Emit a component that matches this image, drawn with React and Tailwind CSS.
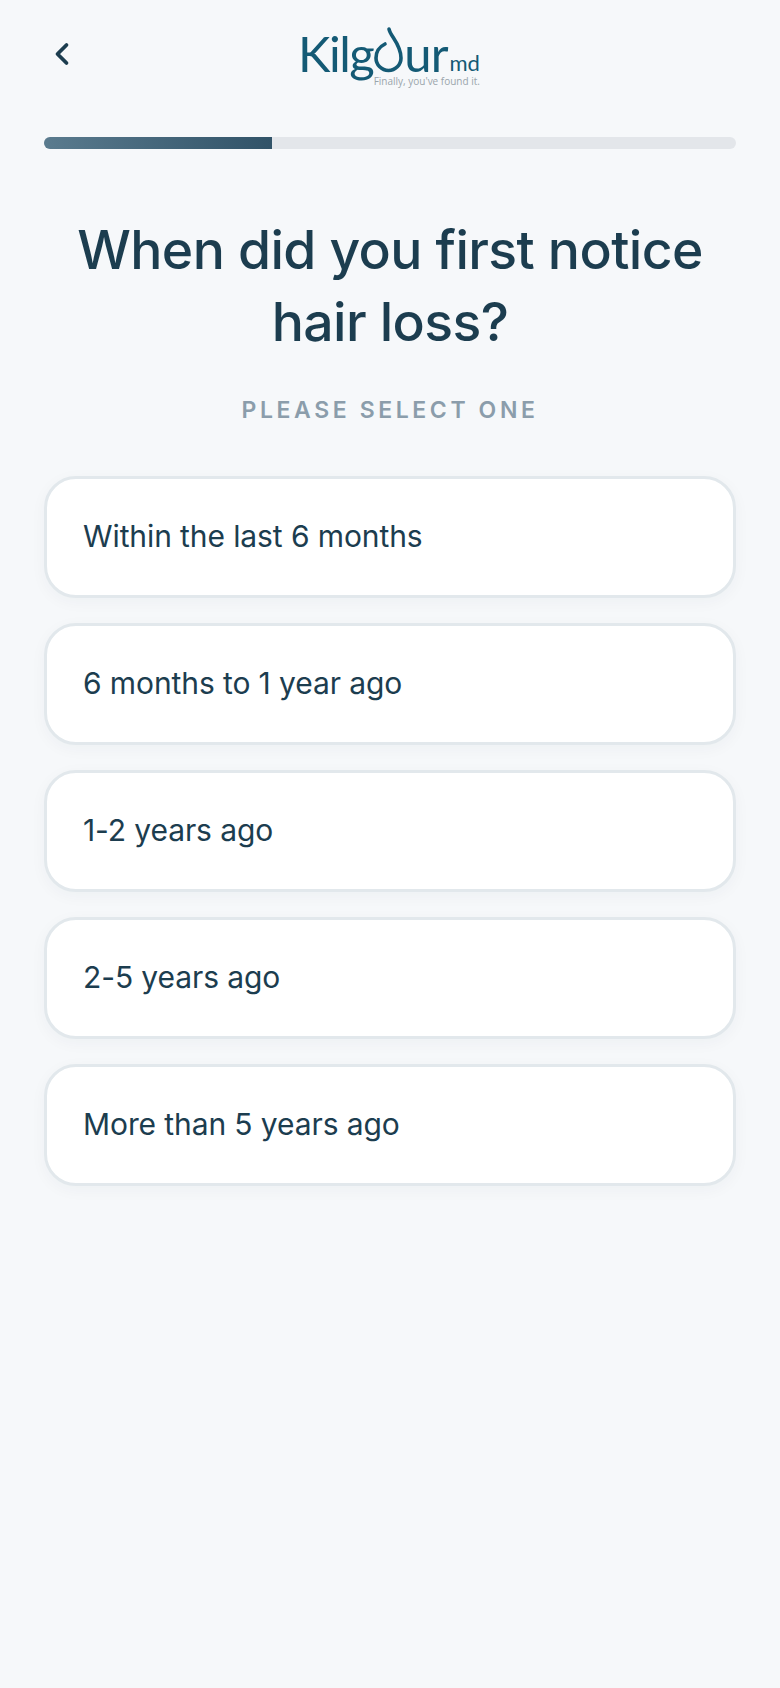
import { ChevronLeft } from 'lucide-react'

const OPTIONS = [
  'Within the last 6 months',
  '6 months to 1 year ago',
  '1-2 years ago',
  '2-5 years ago',
  'More than 5 years ago',
]

function Logo() {
  return (
    <div className="flex flex-col items-end font-['Lato',sans-serif] -ml-[2px]">
      <div className="flex items-end h-[48px] text-[#145a75]">
        <span className="text-[49px] leading-[46px] font-normal tracking-[-1.5px]">Kilg</span>
        {/* the drop stands in for the "o" */}
        <svg width="31" height="47" viewBox="0 0 31 47" fill="none" className="mb-[3px]">
          <path d="M16 3c1 7 12 15 12 29a12.5 12.5 0 0 1-25 0c0-8 5-12 9-14" stroke="#145a75" strokeWidth="3.6" strokeLinecap="round" />
        </svg>
        <span className="text-[49px] leading-[46px] font-normal tracking-[-1px]">ur</span>
        <span className="text-[22px] leading-[26px] ml-[2px]">md</span>
      </div>
      <span className="text-[10px] leading-[10px] text-[#9aa5ab] font-['Open_Sans',sans-serif]">Finally, you've found it.</span>
    </div>
  )
}

export default function App() {
  return (
    <div className="min-h-[1688px] bg-[#f6f8fa] px-[44px] font-['Inter',sans-serif] text-[#1c3d4f]">
      {/* Header */}
      <div className="relative flex justify-center pt-[28px] h-[137px]">
        <button className="absolute left-0 top-[36px] text-[#1c3d4f]">
          <ChevronLeft size={36} strokeWidth={2.5} />
        </button>
        <Logo />
      </div>

      {/* Progress */}
      <div className="h-3 rounded-full bg-[#e3e6ea] overflow-hidden">
        <div className="h-full w-[33%] bg-gradient-to-r from-[#5a7b8e] to-[#315368]"></div>
      </div>

      <h1 className="mt-[65px] -mx-[10px] text-center text-[53.5px] leading-[72px] font-[450] tracking-[-0.6px]">
        When did you first notice hair loss?
      </h1>
      <p className="mt-[36px] text-center text-[23px] leading-[32px] font-semibold tracking-[3.6px] text-[#8b9dab]">
        PLEASE SELECT ONE
      </p>

      <div className="mt-[50px] flex flex-col gap-[25px]">
        {OPTIONS.map(o => (
          <div key={o} className="h-[122px] flex items-center px-[36px] pb-[1px] bg-white rounded-[32px] border-[3px] border-[#e2e8ec] shadow-[0_4px_16px_rgba(28,61,79,0.04)] text-[30px] font-[420] tracking-[-0.1px]">
            {o}
          </div>
        ))}
      </div>
    </div>
  )
}
